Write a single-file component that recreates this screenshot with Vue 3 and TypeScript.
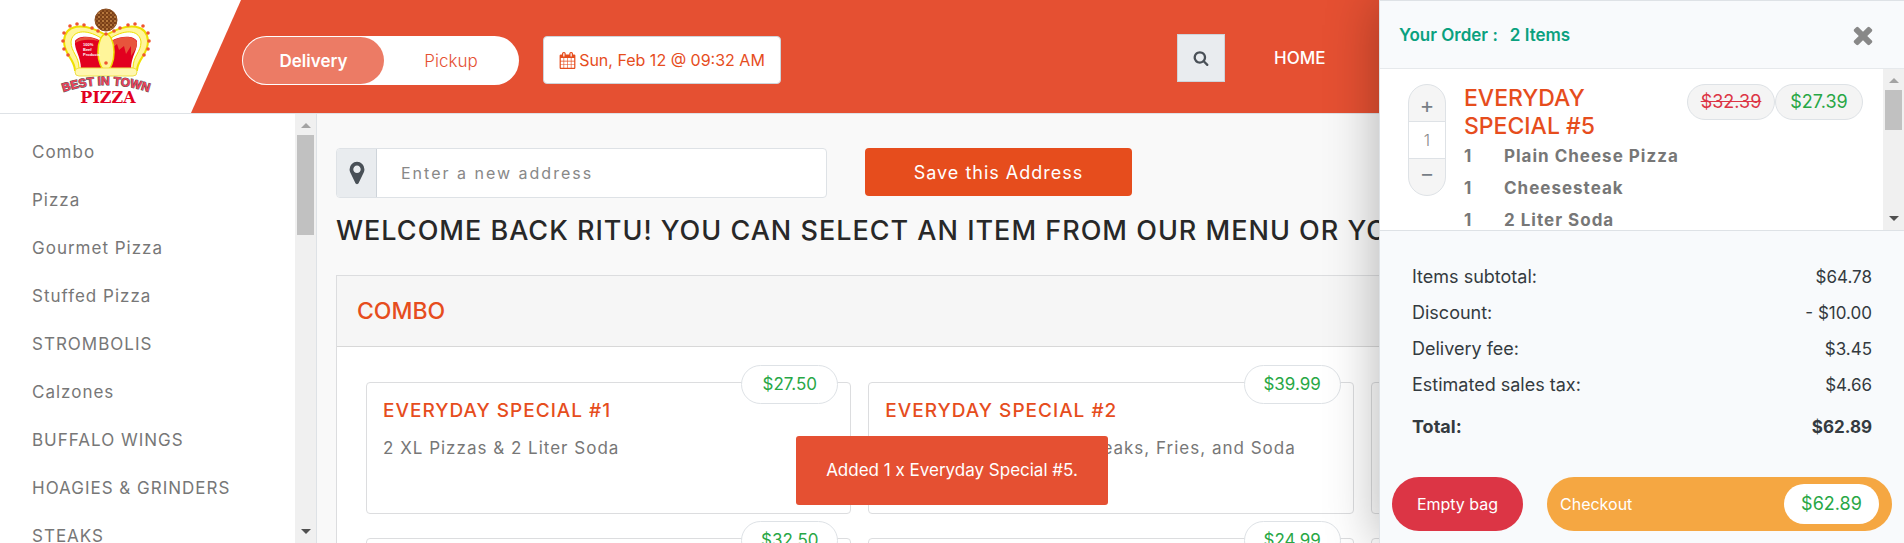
<script setup lang="ts">
import { ref } from 'vue'

interface Special {
  title: string
  text: string
  price: string
}

const mode = ref<'delivery' | 'pickup'>('delivery')
const address = ref('')
const quantity = ref(1)

const categories: string[] = [
  'Combo',
  'Pizza',
  'Gourmet Pizza',
  'Stuffed Pizza',
  'STROMBOLIS',
  'Calzones',
  'BUFFALO WINGS',
  'HOAGIES & GRINDERS',
  'STEAKS',
]

const specials: Special[] = [
  { title: 'Everyday Special #1', text: '2 XL Pizzas & 2 Liter Soda', price: '$27.50' },
  { title: 'Everyday Special #2', text: 'Large Pizza, 2 Cheesesteaks, Fries, and Soda', price: '$39.99' },
  { title: 'Everyday Special #3', text: '', price: '$29.99' },
  { title: 'Everyday Special #4', text: '', price: '$32.50' },
  { title: 'Everyday Special #5', text: '', price: '$24.99' },
  { title: 'Everyday Special #6', text: '', price: '$32.39' },
]

const orderParts: string[] = ['Plain Cheese Pizza', 'Cheesesteak', '2 Liter Soda']

const totals: { label: string; value: string }[] = [
  { label: 'Items subtotal:', value: '$64.78' },
  { label: 'Discount:', value: '- $10.00' },
  { label: 'Delivery fee:', value: '$3.45' },
  { label: 'Estimated sales tax:', value: '$4.66' },
]

const beads: [number, number][] = [
  [27, 24], [20, 26], [34, 25], [42, 28], [14, 33], [13, 41], [14, 49], [18, 55],
  [48, 31], [56, 34], [64, 31], [70, 28], [78, 25], [85, 24], [93, 26], [98, 33], [99, 41], [98, 49], [94, 55], [56, 63],
]
</script>

<template>
  <div class="page">
    <header class="top">
      <a class="brand" href="#" aria-label="Best in Town Pizza">
        <svg class="logo" viewBox="0 0 112 112" aria-hidden="true">
          <defs>
            <path id="brand-arc" d="M8 94 Q56 76 104 94" />
            <pattern id="crust" width="4" height="4" patternUnits="userSpaceOnUse">
              <rect width="4" height="4" fill="#7a3f17" />
              <circle cx="1" cy="1" r="1" fill="#c98a4a" />
              <circle cx="3" cy="3" r="0.8" fill="#b5763a" />
            </pattern>
          </defs>
          <path d="M25 70C24 58 14 55 14 41C15 25 32 21 56 35C80 21 97 25 98 41C98 55 88 58 87 70Z" fill="#fff59a" stroke="#efe000" stroke-width="2" />
          <path d="M29 68C29 56 21 52 21 42C22 31 35 28 51 38L51 68ZM83 68C83 56 91 52 91 42C90 31 77 28 61 38L61 68Z" fill="#fff" stroke="#efe000" stroke-width="1" />
          <path d="M31 69C31 56 24 50 25 41C28 36 40 35 51 41L51 69ZM81 69C81 56 88 50 87 41C84 36 72 35 61 41L61 69Z" fill="#e2001f" />
          <path d="M25 43C28 36 40 35 49 41C40 39 32 39 25 43ZM62 41C72 35 84 36 87 42C87 49 84 51 81 56L81 46L76 54L74 46L69 50L67 44L62 48Z" fill="#e8543c" />
          <ellipse cx="56" cy="52" rx="8" ry="18" fill="#fff59a" stroke="#efe000" stroke-width="1.5" />
          <rect x="25" y="68" width="62" height="8" rx="4" fill="#fff7b0" stroke="#efe04a" />
          <circle v-for="([x, y], i) in beads" :key="i" :cx="x" :cy="y" r="1.8" fill="#ee5530" />
          <circle cx="56" cy="20" r="11" fill="url(#crust)" stroke="#8a4d20" />
          <g class="mini">
            <text x="33" y="46">100%</text>
            <text x="33" y="51">Beef</text>
            <text x="33" y="56">Products</text>
          </g>
          <text class="arc" text-anchor="middle"><textPath href="#brand-arc" startOffset="50%">BEST IN TOWN</textPath></text>
          <text class="word" x="58" y="103" text-anchor="middle">PIZZA</text>
        </svg>
      </a>
      <div class="banner">
        <div class="toggle" role="radiogroup" aria-label="Order type">
          <label :class="{ on: mode === 'delivery' }">
            <input v-model="mode" type="radio" name="mode" value="delivery" />Delivery
          </label>
          <label :class="{ on: mode === 'pickup' }">
            <input v-model="mode" type="radio" name="mode" value="pickup" />Pickup
          </label>
        </div>
        <button class="date" type="button">
          <svg viewBox="0 0 1792 1792" aria-hidden="true"><path d="M192 1664h288v-288h-288v288zm352 0h320v-288h-320v288zm-352-352h288v-320h-288v320zm352 0h320v-320h-320v320zm-352-384h288v-288h-288v288zm736 736h320v-288h-320v288zm-384-736h320v-288h-320v288zm768 736h288v-288h-288v288zm-384-352h320v-320h-320v320zm-352-864v-288q0-13-9.5-22.5t-22.5-9.5h-64q-13 0-22.5 9.5t-9.5 22.5v288q0 13 9.5 22.5t22.5 9.5h64q13 0 22.5-9.5t9.5-22.5zm736 864h288v-320h-288v320zm-384-384h320v-288h-320v288zm384 0h288v-288h-288v288zm32-480v-288q0-13-9.5-22.5t-22.5-9.5h-64q-13 0-22.5 9.5t-9.5 22.5v288q0 13 9.5 22.5t22.5 9.5h64q13 0 22.5-9.5t9.5-22.5zm384-64v1280q0 52-38 90t-90 38h-1408q-52 0-90-38t-38-90v-1280q0-52 38-90t90-38h128v-96q0-66 47-113t113-47h64q66 0 113 47t47 113v96h384v-96q0-66 47-113t113-47h64q66 0 113 47t47 113v96h128q52 0 90 38t38 90z" /></svg>
          <span>Sun, Feb 12 @ 09:32 AM</span>
        </button>
        <nav class="links">
          <button class="search" type="button" aria-label="Search">
            <svg viewBox="0 0 1792 1792" aria-hidden="true"><path d="M1216 832q0-185-131.500-316.500t-316.500-131.500-316.500 131.500-131.500 316.500 131.500 316.500 316.500 131.500 316.500-131.500 131.500-316.500zm512 832q0 52-38 90t-90 38q-54 0-90-38l-343-342q-179 124-399 124-143 0-273.500-55.500t-225-150-150-225-55.500-273.500 55.500-273.500 150-225 225-150 273.500-55.500 273.500 55.500 225 150 150 225 55.500 273.500q0 220-124 399l343 343q37 37 37 90z" /></svg>
          </button>
          <a href="#">HOME</a>
        </nav>
      </div>
    </header>

    <div class="body">
      <aside class="side">
        <nav class="cats">
          <a v-for="c in categories" :key="c" href="#">{{ c }}</a>
        </nav>
        <div class="bar" aria-hidden="true">
          <i class="up"></i>
          <b class="thumb tall"></b>
          <i class="down"></i>
        </div>
      </aside>

      <main class="main">
        <form class="address" @submit.prevent>
          <div class="field">
            <label for="address" aria-label="Address">
              <svg viewBox="0 0 1792 1792" aria-hidden="true"><path d="M1152 640q0-106-75-181t-181-75-181 75-75 181 75 181 181 75 181-75 75-181zm256 0q0 109-33 179l-364 774q-16 33-47.500 52t-67.500 19-67.500-19-46.500-52l-365-774q-33-70-33-179 0-212 150-362t362-150 362 150 150 362z" /></svg>
            </label>
            <input id="address" v-model="address" type="text" placeholder="Enter a new address" />
          </div>
          <button class="save" type="submit">Save this Address</button>
        </form>
        <h1>Welcome back Ritu! You can select an item from our menu or you can reorder</h1>
        <section class="group">
          <h2>COMBO</h2>
          <div class="grid">
            <article v-for="s in specials" :key="s.title" class="card">
              <h3>{{ s.title }}</h3>
              <p>{{ s.text }}</p>
              <span class="price">{{ s.price }}</span>
            </article>
          </div>
        </section>
      </main>
    </div>

    <div class="toast" role="status">Added 1 x Everyday Special #5.</div>

    <aside class="order">
      <div class="order-head">
        <strong>Your Order :<span>2 Items</span></strong>
        <button type="button" aria-label="Close">
          <svg viewBox="0 0 1792 1792" aria-hidden="true"><path d="M1490 1322q0 40-28 68l-136 136q-28 28-68 28t-68-28l-294-294-294 294q-28 28-68 28t-68-28l-136-136q-28-28-28-68t28-68l294-294-294-294q-28-28-28-68t28-68l136-136q28-28 68-28t68 28l294 294 294-294q28-28 68-28t68 28l136 136q28 28 28 68t-28 68l-294 294 294 294q28 28 28 68z" /></svg>
        </button>
      </div>
      <div class="order-list">
        <div class="line">
          <div class="stepper">
            <button type="button" aria-label="Add one" @click="quantity++">+</button>
            <output>{{ quantity }}</output>
            <button type="button" aria-label="Remove one" @click="quantity--">−</button>
          </div>
          <div class="detail">
            <h3>EVERYDAY SPECIAL #5</h3>
            <ul>
              <li v-for="p in orderParts" :key="p"><span>1</span>{{ p }}</li>
            </ul>
          </div>
          <div class="prices">
            <del>$32.39</del>
            <span>$27.39</span>
          </div>
        </div>
        <div class="bar" aria-hidden="true">
          <i class="up"></i>
          <b class="thumb"></b>
          <i class="down"></i>
        </div>
      </div>
      <div class="order-foot">
        <dl>
          <div v-for="t in totals" :key="t.label"><dt>{{ t.label }}</dt><dd>{{ t.value }}</dd></div>
          <div class="total"><dt>Total:</dt><dd>$62.89</dd></div>
        </dl>
        <div class="actions">
          <button class="empty" type="button">Empty bag</button>
          <button class="checkout" type="button">Checkout<span>$62.89</span></button>
        </div>
      </div>
    </aside>
  </div>
</template>

<style>
body {
  margin: 0;
  overflow: hidden;
}
</style>

<style scoped>
.page {
  position: relative;
  display: flex;
  flex-direction: column;
  height: 100vh;
  overflow: hidden;
  background: #f9f9f9;
  font-family: Inter, 'Open Sans', sans-serif;
  font-size: 16px;
  color: #777;
}
.page *,
.page *::before {
  box-sizing: border-box;
}
button,
input {
  font: inherit;
  margin: 0;
}
button {
  border: 0;
  padding: 0;
  cursor: pointer;
}
a {
  color: inherit;
  text-decoration: none;
}
svg {
  display: block;
  fill: currentColor;
}
h1,
h2,
h3,
p,
ul,
dl,
dd {
  margin: 0;
  padding: 0;
}

.top {
  display: flex;
  flex: none;
  height: 114px;
  background: #fff;
  border-bottom: 1px solid #dee2e6;
}
.brand {
  flex: none;
  width: 191px;
  padding-left: 50px;
}
.logo {
  width: 112px;
  height: 112px;
}
.mini {
  font: bold 4px 'Liberation Sans', sans-serif;
  fill: #fff;
}
.arc {
  font: bold 12px 'Liberation Sans', sans-serif;
  fill: #ee4058;
  stroke: #555;
  stroke-width: 1px;
  paint-order: stroke;
}
.word {
  font: bold 16px 'DejaVu Serif', serif;
  fill: #e2001f;
}
.banner {
  display: flex;
  flex: 1;
  align-items: flex-start;
  height: 113px;
  padding: 36px 0 0 51px;
  background: #e55032;
  clip-path: polygon(50px 0, 100% 0, 100% 100%, 0 100%);
}
.toggle {
  display: flex;
  width: 277px;
  height: 49px;
  padding: 1px;
  border-radius: 25px;
  background: #fff;
}
.toggle label {
  display: flex;
  flex: 1;
  align-items: center;
  justify-content: center;
  border-radius: 24px;
  color: #e55032;
  font-size: 17px;
  font-weight: 300;
  cursor: pointer;
}
.toggle .on {
  flex: 0 0 141px;
  background: #ec7b65;
  color: #fff;
  font-weight: 600;
}
.toggle input {
  position: absolute;
  opacity: 0;
}
.date {
  display: flex;
  align-items: center;
  justify-content: center;
  gap: 3px;
  width: 238px;
  height: 48px;
  margin-left: 24px;
  border: 1px solid #ced4da;
  border-radius: 4px;
  background: #fff;
  color: #e64d1d;
  white-space: nowrap;
}
.date svg {
  width: 17px;
  height: 17px;
}
.links {
  display: flex;
  align-items: center;
  gap: 49px;
  margin: -2px 0 0 396px;
  color: #fff;
  font-size: 17px;
  font-weight: 500;
}
.search {
  display: grid;
  place-items: center;
  width: 48px;
  height: 48px;
  border: 1px solid #ced4da;
  background: #e9ecef;
  color: #495057;
}
.search svg {
  width: 16px;
  height: 16px;
}

.body {
  display: flex;
  flex: 1;
  min-height: 0;
}
.side {
  display: flex;
  flex: none;
  width: 317px;
  border-right: 1px solid #dee2e6;
  background: #fff;
}
.cats {
  flex: 1;
  padding-top: 14px;
  overflow: hidden;
}
.cats a {
  display: block;
  padding-left: 32px;
  font-size: 17px;
  line-height: 48px;
  letter-spacing: 1px;
  white-space: nowrap;
}
.bar {
  display: flex;
  flex: none;
  flex-direction: column;
  align-items: center;
  width: 21px;
  padding: 9px 0 9px;
  background: #f0f0f0;
}
.bar i {
  border: 5px solid transparent;
}
.bar .up {
  border-top: 0;
  border-bottom-color: #a3a3a3;
}
.bar .down {
  margin-top: auto;
  border-bottom: 0;
  border-top-color: #505050;
}
.thumb {
  width: 17px;
  height: 40px;
  margin-top: 7px;
  background: #c1c1c1;
}
.thumb.tall {
  height: 100px;
}

.main {
  flex: 1;
  min-width: 0;
  padding: 34px 18px 0 19px;
  overflow: hidden;
}
.address {
  display: flex;
  gap: 38px;
}
.field {
  display: flex;
  width: 491px;
  height: 50px;
  border: 1px solid #dee2e6;
  border-radius: 4px;
  background: #fff;
  overflow: hidden;
}
.field label {
  display: grid;
  place-items: center;
  flex: none;
  width: 40px;
  border-right: 1px solid #ced4da;
  background: #e9ecef;
  color: #495057;
}
.field svg {
  width: 26px;
  height: 26px;
}
.field input {
  flex: 1;
  min-width: 0;
  padding: 0 24px;
  border: 0;
  outline: 0;
  background: transparent;
  letter-spacing: 2px;
}
.field input::placeholder {
  color: #888;
  opacity: 1;
}
.save {
  width: 267px;
  height: 48px;
  border-radius: 4px;
  background: #e64d1d;
  color: #fff;
  font-size: 18px;
  letter-spacing: 1px;
}
h1 {
  margin-top: 16px;
  color: #282828;
  font-size: 27px;
  font-weight: 500;
  line-height: 34px;
  letter-spacing: 1px;
  text-transform: uppercase;
  white-space: nowrap;
}
.group {
  margin-top: 27px;
  border: 1px solid #dcdddf;
  background: #fff;
}
.group h2 {
  padding: 0 20px;
  border-bottom: 1px solid #d8d8d8;
  background: #f6f6f6;
  color: #e64d1d;
  font-size: 23px;
  font-weight: 500;
  line-height: 70px;
}
.grid {
  display: grid;
  grid-template-columns: repeat(3, minmax(0, 1fr));
  gap: 24px 17px;
  padding: 35px 29px;
}
.card {
  position: relative;
  height: 132px;
  padding: 13px 16px;
  border: 1px solid #dcdddf;
  border-radius: 4px;
}
.card h3 {
  color: #e64d1d;
  font-size: 19px;
  font-weight: 500;
  line-height: 30px;
  letter-spacing: 1px;
  text-transform: uppercase;
}
.card p {
  margin-top: 8px;
  font-size: 17px;
  line-height: 28px;
  letter-spacing: 1px;
  white-space: nowrap;
}
.price {
  position: absolute;
  top: -18px;
  right: 12px;
  width: 97px;
  border: 1px solid #dee2e6;
  border-radius: 20px;
  background: #fff;
  color: #28a745;
  font-size: 17px;
  line-height: 37px;
  text-align: center;
}

.toast {
  position: absolute;
  top: 436px;
  left: 50%;
  width: 312px;
  margin-left: -156px;
  border-radius: 3px;
  background: #e55032;
  color: #fff;
  font-size: 17px;
  line-height: 69px;
  text-align: center;
}

.order {
  position: absolute;
  top: 0;
  right: 0;
  bottom: 0;
  display: flex;
  flex-direction: column;
  width: 525px;
  border: solid #dee2e6;
  border-width: 1px 0 0 1px;
  background: #f8fafc;
  box-shadow: 0 0 50px rgba(0, 0, 0, 0.3);
}
.order-head {
  display: flex;
  flex: none;
  align-items: center;
  justify-content: space-between;
  height: 68px;
  padding: 0 27px 0 19px;
  border-bottom: 1px solid #e6e9ec;
  color: #0aa17f;
  font-size: 17px;
}
.order-head strong {
  font-weight: 600;
}
.order-head span {
  margin-left: 12px;
}
.order-head button {
  background: none;
  color: #888;
}
.order-head svg {
  width: 28px;
  height: 28px;
}
.order-list {
  display: flex;
  flex: none;
  height: 162px;
  border-bottom: 1px solid #dee2e6;
  background: #fff;
  overflow: hidden;
}
.line {
  display: flex;
  flex: 1;
  align-items: flex-start;
  padding: 15px 20px 0 28px;
}
.stepper {
  display: flex;
  flex: none;
  flex-direction: column;
  width: 38px;
  height: 112px;
  border: 1px solid #dee2e6;
  border-radius: 19px;
  background: #f5f5f5;
  overflow: hidden;
}
.stepper button {
  flex: 1;
  padding-top: 4px;
  background: none;
  color: #777e86;
  font-size: 22px;
  line-height: 32px;
}
.stepper button:last-child {
  padding: 0 0 8px;
  line-height: 28px;
}
.stepper output {
  border: solid #dee2e6;
  border-width: 1px 0;
  background: #fff;
  color: #888;
  font-weight: 300;
  line-height: 36px;
  text-align: center;
}
.detail {
  flex: 1;
  margin-left: 18px;
}
.detail h3 {
  width: 160px;
  color: #e64d1d;
  font-size: 23px;
  font-weight: 500;
  line-height: 28px;
}
.detail ul {
  list-style: none;
  white-space: nowrap;
}
.detail li {
  font-size: 17px;
  font-weight: 700;
  line-height: 32px;
  letter-spacing: 1px;
}
.detail li span {
  display: inline-block;
  width: 40px;
}
.prices {
  display: flex;
}
.prices > * {
  width: 88px;
  border: 1px solid #dee2e6;
  border-radius: 18px;
  background: #f4f4f4;
  color: #28a745;
  font-size: 18px;
  line-height: 34px;
  text-align: center;
}
.prices del {
  color: #dc3545;
}
.order-foot {
  flex: 1;
  padding: 28px 12px 0 12px;
}
dl {
  padding: 0 20px;
  color: #343a40;
  font-size: 17px;
}
dl div {
  display: flex;
  justify-content: space-between;
  line-height: 36px;
}
dt {
  font-size: 18px;
}
dl .total {
  margin-top: 6px;
  font-weight: 700;
}
.actions {
  display: flex;
  gap: 24px;
  margin-top: 32px;
}
.empty,
.checkout {
  height: 54px;
  border-radius: 27px;
  color: #fff;
}
.empty {
  width: 131px;
  background: #dc3545;
}
.checkout {
  display: flex;
  flex: 1;
  align-items: center;
  justify-content: space-between;
  padding: 0 13px;
  background: #f5a742;
}
.checkout span {
  width: 95px;
  border-radius: 20px;
  background: #fff;
  color: #28a745;
  font-size: 18px;
  line-height: 40px;
  text-align: center;
}
</style>
